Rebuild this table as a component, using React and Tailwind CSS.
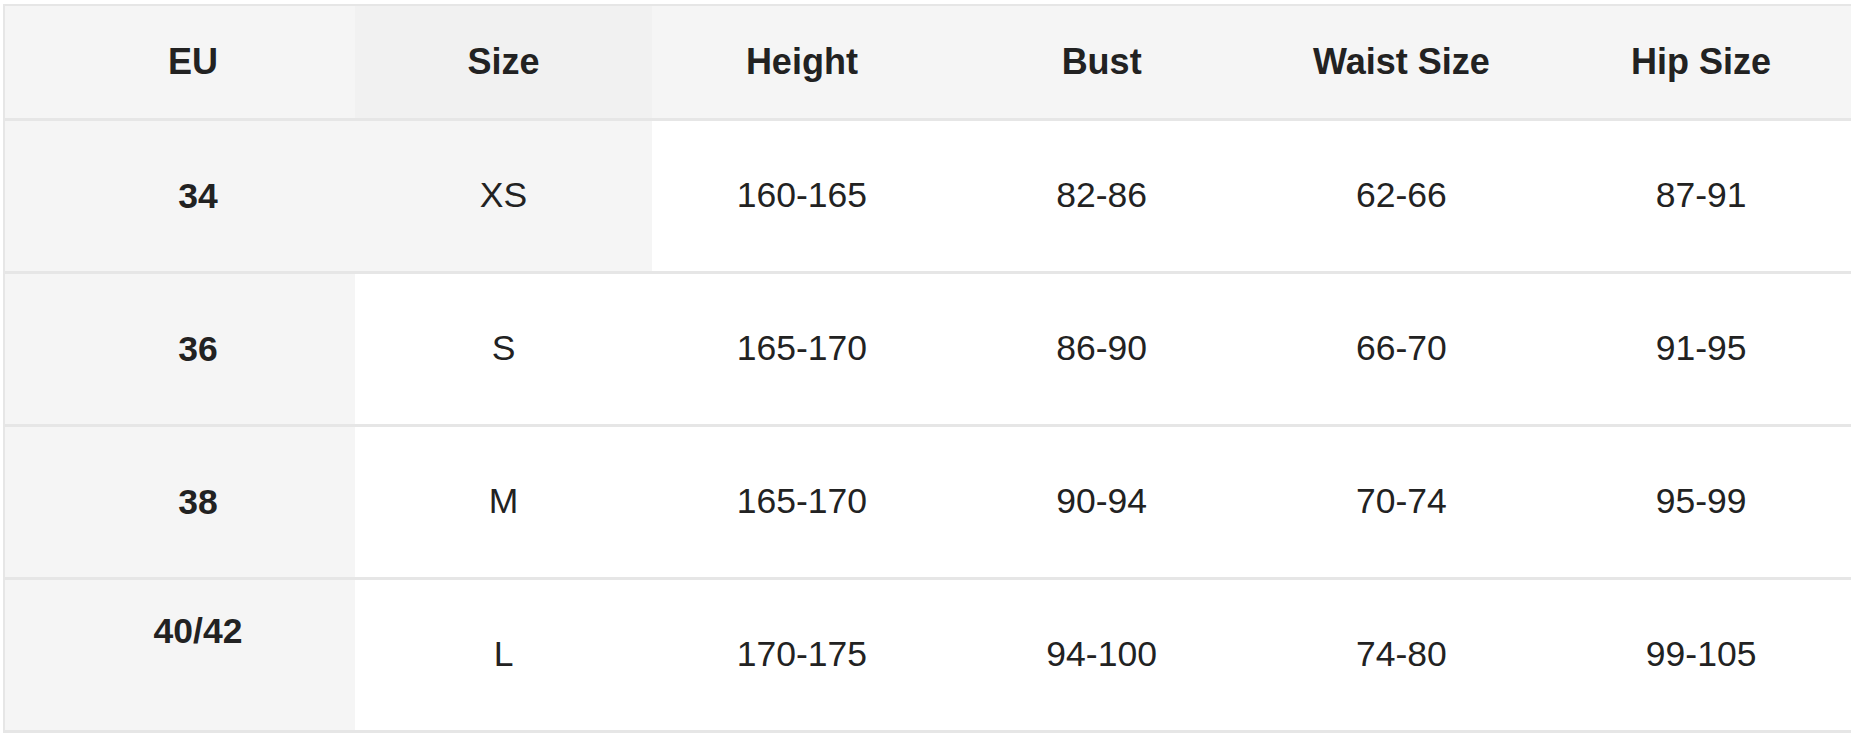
import React from "react";

const headers = ["EU", "Size", "Height", "Bust", "Waist Size", "Hip Size"];

const rows = [
  { eu: "34", size: "XS", height: "160-165", bust: "82-86", waist: "62-66", hip: "87-91" },
  { eu: "36", size: "S", height: "165-170", bust: "86-90", waist: "66-70", hip: "91-95" },
  { eu: "38", size: "M", height: "165-170", bust: "90-94", waist: "70-74", hip: "95-99" },
  { eu: "40/42", size: "L", height: "170-175", bust: "94-100", waist: "74-80", hip: "99-105" },
];

export default function App() {
  return (
    <div
      className="min-h-screen bg-white pl-[3px] pt-[4px] text-[#222]"
      style={{ fontFamily: '"Liberation Sans", Arial, sans-serif' }}
    >
      <div className="w-[1848px] border-l-2 border-t-2 border-[#e6e6e6]">
        {/* header */}
        <div className="grid h-[115px] grid-cols-[350px_297px_1fr_1fr_1fr_1fr] border-b-[3px] border-[#e6e6e6] bg-[#f5f5f5] text-[36px] font-bold">
          {headers.map((h, i) => (
            <div
              key={h}
              className={
                "flex items-center justify-center " +
                (i === 0 ? "pl-[26px] " : "") +
                (i === 1 ? "bg-[#f1f1f1]" : "")
              }
            >
              {h}
            </div>
          ))}
        </div>

        {rows.map((r, idx) => (
          <div
            key={r.eu}
            className="grid h-[153px] grid-cols-[350px_297px_1fr_1fr_1fr_1fr] border-b-[3px] border-[#e6e6e6] text-[35.5px]"
          >
            <div className="flex flex-col items-center justify-center bg-[#f5f5f5] pl-[36px] font-bold leading-[48px]">
              <span>{r.eu}</span>
              {r.eu === "40/42" && <span>&nbsp;</span>}
            </div>
            <div
              className={
                "flex items-center justify-center " +
                (idx === 0 ? "bg-[#f5f5f5]" : "")
              }
            >
              {r.size}
            </div>
            <div className="flex items-center justify-center">{r.height}</div>
            <div className="flex items-center justify-center">{r.bust}</div>
            <div className="flex items-center justify-center">{r.waist}</div>
            <div className="flex items-center justify-center">{r.hip}</div>
          </div>
        ))}
      </div>
    </div>
  );
}
